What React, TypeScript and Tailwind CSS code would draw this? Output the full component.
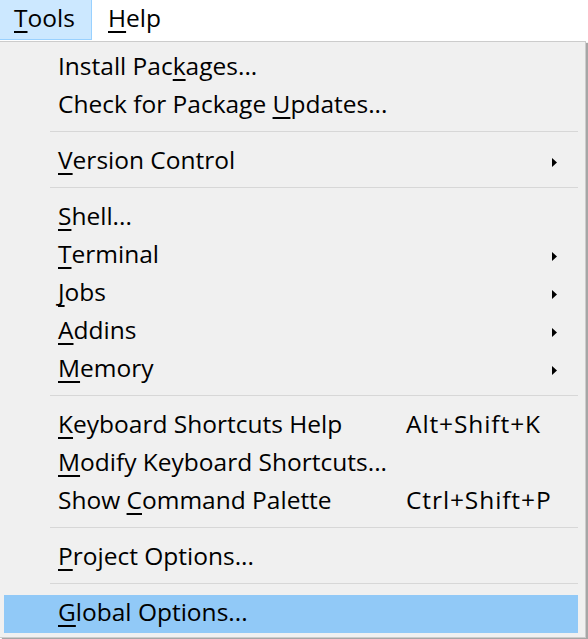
import React from "react";

type Item =
  | { type: "sep" }
  | {
      type: "item";
      pre: string;
      u: string;
      post: string;
      shortcut?: string;
      sub?: boolean;
      active?: boolean;
    };

const items: Item[] = [
  { type: "item", pre: "Install Pac", u: "k", post: "ages..." },
  { type: "item", pre: "Check for Package ", u: "U", post: "pdates..." },
  { type: "sep" },
  { type: "item", pre: "", u: "V", post: "ersion Control", sub: true },
  { type: "sep" },
  { type: "item", pre: "", u: "S", post: "hell..." },
  { type: "item", pre: "", u: "T", post: "erminal", sub: true },
  { type: "item", pre: "", u: "J", post: "obs", sub: true },
  { type: "item", pre: "", u: "A", post: "ddins", sub: true },
  { type: "item", pre: "", u: "M", post: "emory", sub: true },
  { type: "sep" },
  { type: "item", pre: "", u: "K", post: "eyboard Shortcuts Help", shortcut: "Alt+Shift+K" },
  { type: "item", pre: "", u: "M", post: "odify Keyboard Shortcuts..." },
  { type: "item", pre: "Show ", u: "C", post: "ommand Palette", shortcut: "Ctrl+Shift+P" },
  { type: "sep" },
  { type: "item", pre: "", u: "P", post: "roject Options..." },
  { type: "sep" },
  { type: "item", pre: "", u: "G", post: "lobal Options...", active: true },
];

function U({ c }: { c: string }) {
  return (
    <span className="underline decoration-[2px] underline-offset-[4px] [text-decoration-skip-ink:none]">
      {c}
    </span>
  );
}

function Arrow() {
  return (
    <svg width="5" height="9" viewBox="0 0 5 9" className="block">
      <path d="M0 0 L5 4.5 L0 9 Z" fill="#000" />
    </svg>
  );
}

export default function App() {
  return (
    <div
      className="w-[588px] h-[639px] bg-white overflow-hidden text-black"
      style={{ fontFamily: '"Open Sans", "Noto Sans", sans-serif' }}
    >
      {/* menu bar */}
      <div className="h-[41px] flex items-start bg-white">
        <div className="h-[40px] w-[92px] bg-[#cce8ff] border border-t-0 border-l-0 border-[#99d1ff] flex items-center pl-[14px] pb-[3px] text-[24.5px] leading-none">
          <U c="T" />
          ools
        </div>
        <div className="h-[40px] flex items-center pl-[16px] pb-[3px] text-[24.5px] leading-none">
          <U c="H" />
          elp
        </div>
      </div>

      {/* dropdown */}
      <div className="w-[586px] h-[597px] bg-[#f0f0f0] border border-l-0 border-[#cccccc] shadow-[2px_2px_1px_rgba(0,0,0,0.35)] pt-[7px] pl-[4px] pr-[7px]">
        {items.map((it, i) =>
          it.type === "sep" ? (
            <div key={i} className="h-[18px] pt-[6px] pl-[46px]">
              <div className="h-px bg-[#d7d7d7]" />
            </div>
          ) : (
            <div
              key={i}
              className={
                "h-[38px] flex items-center pl-[54px] pb-[3px] text-[24.5px] leading-none " +
                (it.active ? "bg-[#91c9f7]" : "")
              }
            >
              <div className="w-[348px] whitespace-nowrap">
                {it.pre}
                <U c={it.u} />
                {it.post}
              </div>
              <div className="flex-1 whitespace-nowrap tracking-[0.9px]">
                {it.shortcut ?? ""}
              </div>
              <div className="w-[26px] flex items-center pt-[3px]">
                {it.sub ? <Arrow /> : null}
              </div>
            </div>
          )
        )}
      </div>
    </div>
  );
}
